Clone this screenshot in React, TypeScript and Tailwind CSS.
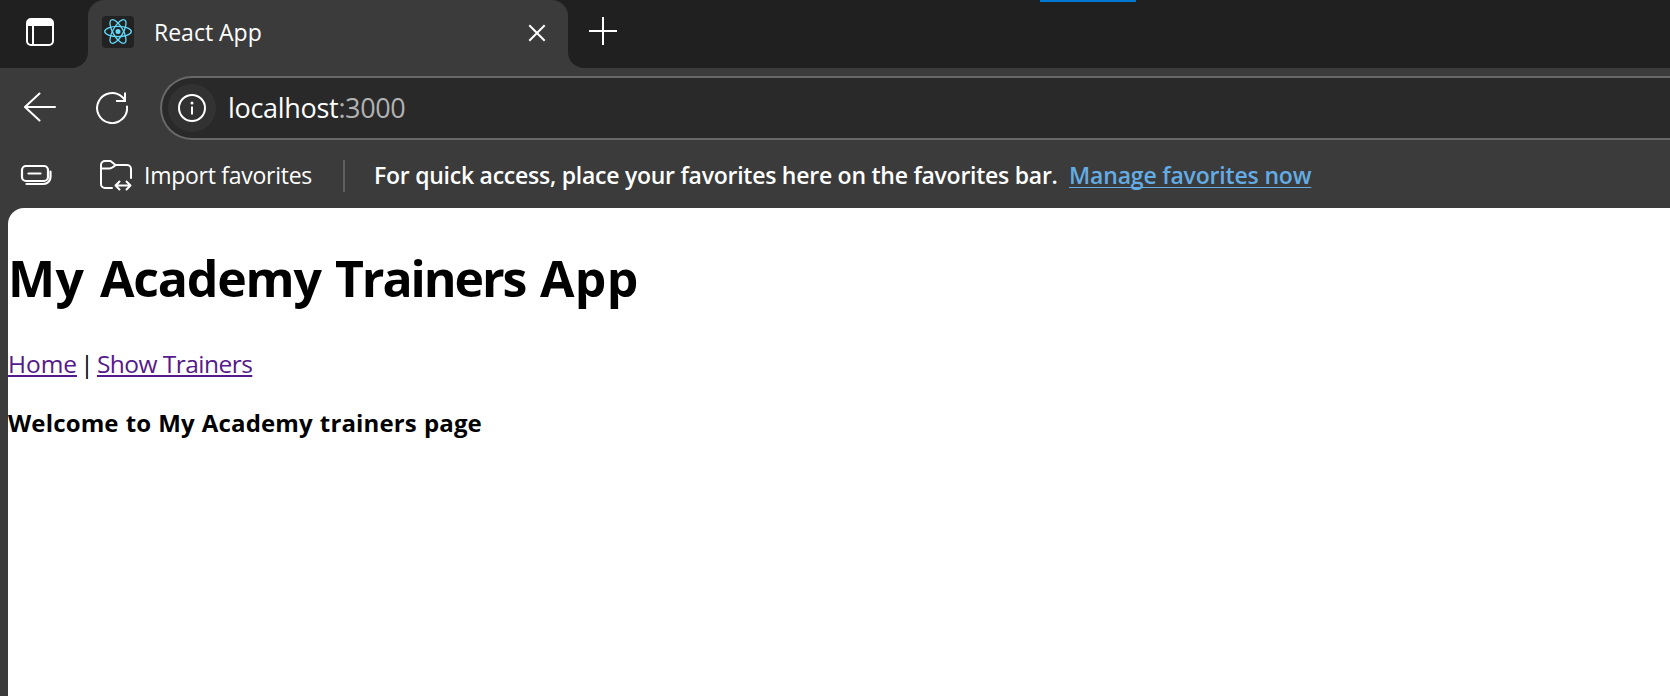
import type { ReactNode } from "react";

function Icon({ size = 32, width = 2, className = "", children }: { size?: number; width?: number; className?: string; children: ReactNode }) {
  return (
    <svg
      width={size}
      height={size}
      viewBox={`0 0 ${size} ${size}`}
      fill="none"
      stroke="#fff"
      strokeWidth={width}
      strokeLinecap="round"
      strokeLinejoin="round"
      className={`block shrink-0 ${className}`}
    >
      {children}
    </svg>
  );
}

function ReactFavicon() {
  return (
    <div className="flex size-8 shrink-0 items-center justify-center rounded-[4px] bg-[#222222]">
      <svg width="32" height="32" viewBox="0 0 32 32" fill="none" stroke="#61dafb" strokeWidth="1.3">
        <circle cx="16" cy="15.5" r="2.5" fill="#61dafb" stroke="none" />
        <ellipse cx="16" cy="15.5" rx="13.3" ry="5.1" />
        <ellipse cx="16" cy="15.5" rx="13.3" ry="5.1" transform="rotate(60 16 15.5)" />
        <ellipse cx="16" cy="15.5" rx="13.3" ry="5.1" transform="rotate(120 16 15.5)" />
      </svg>
    </div>
  );
}

function TabStrip() {
  return (
    <div className="flex h-[68px] bg-[#3b3b3b]">
      <div className="w-[88px] rounded-br-[16px] bg-[#202020] pt-4 pl-6">
        <Icon>
          <rect x="3" y="3" width="26" height="26" rx="4" />
          <path d="M3 10V7a4 4 0 0 1 4-4h18a4 4 0 0 1 4 4v3Z" fill="#fff" stroke="none" />
          <path d="M3 9h26M9 10v18" strokeLinecap="butt" />
        </Icon>
      </div>
      <div className="w-[480px] bg-linear-to-b from-[#202020] from-50% to-[#3b3b3b] to-50%">
        <div className="flex h-[68px] items-start rounded-t-[16px] bg-[#3b3b3b] pl-3.5">
          <div className="pt-4">
            <ReactFavicon />
          </div>
          <span className="ml-5 flex-1 text-[23px] leading-[64px] text-white">React App</span>
          <Icon className="mt-[17px] mr-[15px]">
            <path d="M8.3 8.3l15.4 15.4M23.7 8.3L8.3 23.7" strokeLinecap="butt" />
          </Icon>
        </div>
      </div>
      <div className="flex flex-1 items-start rounded-bl-[16px] bg-[#202020] pl-[19px]">
        <Icon className="mt-[15px]">
          <path d="M2 16h28M16 2v28" strokeLinecap="butt" />
        </Icon>
        <div className="ml-[421px] h-0.5 w-24 bg-[#0078d4]" />
      </div>
    </div>
  );
}

function AddressRow() {
  return (
    <div className="flex h-16 items-center">
      <Icon className="ml-6">
        <path d="M31 15H1.5" />
        <path d="M15.5 1.5L1 15l14.5 13.5" />
      </Icon>
      <Icon className="ml-10">
        <path d="M31 14.5A15 15 0 1 1 26.5 5.3L29 8" />
        <path d="M29 .5V9h-9" strokeLinejoin="miter" strokeLinecap="butt" />
      </Icon>
      <div className="ml-8 flex h-16 flex-1 items-center rounded-l-full border-2 border-r-0 border-[#686868] bg-[#292929] pl-1.5">
        <div className="flex size-12 items-center justify-center rounded-full bg-[#323232]">
          <Icon>
            <circle cx="16" cy="16" r="13" />
            <path d="M16 14.5v8" strokeLinecap="butt" />
            <circle cx="16" cy="11" r="1.5" fill="#fff" stroke="none" />
          </Icon>
        </div>
        <div className="ml-3 text-[27px] whitespace-nowrap">
          <span className="tracking-[-0.3px] text-white">localhost</span>
          <span className="tracking-[-0.4px] text-[#b2b2b2]">:3000</span>
        </div>
      </div>
    </div>
  );
}

function FavoritesBar() {
  return (
    <div className="flex h-[68px] items-center text-[23px] whitespace-nowrap text-white">
      <Icon className="ml-5" width={2.2}>
        <rect x="2" y="8" width="26" height="15" rx="4" />
        <path d="M8.500 15.500h12" />
        <path d="M6.500 26h17a7 7 0 0 0 7-7v-5.500" />
      </Icon>
      <Icon className="mt-1 ml-12">
        <path d="M12 28H5a4 4 0 0 1-4-4V5a4 4 0 0 1 4-4h5.5l5 4H27a4 4 0 0 1 4 4v9" />
        <path d="M1 8.5h8.500c2 0 3-.8 6-3.500" />
        <path d="M15.5 25.5h15M19.5 21.500l-4 4 4 4M26.500 21.500l4 4-4 4" />
      </Icon>
      <span className="mt-0.5 ml-3 w-[199px] tracking-[-0.27px]">Import favorites</span>
      <span className="mt-1 h-8 w-0.5 bg-[#5e5e5e]" />
      <span className="mt-0.5 ml-[29px] w-[695px] font-semibold tracking-[-0.25px]">
        For quick access, place your favorites here on the favorites bar.
      </span>
      <a className="mt-0.5 font-semibold tracking-[-0.17px] text-[#63ace5] underline decoration-1 underline-offset-[3px] [text-decoration-skip-ink:none]">
        Manage favorites now
      </a>
    </div>
  );
}

function Page() {
  const link = "text-[#551a8b] underline decoration-2 underline-offset-2 [text-decoration-skip-ink:none]";
  return (
    <main className="ml-2 flex-1 rounded-tl-[16px] bg-white text-black">
      <h1 className="flex pt-9 text-[50px] leading-[68px] font-bold whitespace-pre">
        <span className="w-[92px] tracking-[0.3px]">My </span>
        <span className="w-[235px] tracking-[-1.2px]">Academy </span>
        <span className="w-[205px] tracking-[-2.1px]">Trainers </span>
        <span className="tracking-[0.3px]">App</span>
      </h1>
      <nav className="mt-[35px] flex text-[24.5px] leading-[34px]">
        <a className={`tracking-[-0.07px] ${link}`}>Home</a>
        <span className="w-5 text-center">|</span>
        <a className={`tracking-[-0.54px] ${link}`}>Show Trainers</a>
      </nav>
      <p className="mt-[25px] text-[24px] leading-[34px] font-bold tracking-[0.15px] [word-spacing:0.6px]">Welcome to My Academy trainers page</p>
    </main>
  );
}

export default function App() {
  return (
    <div className="flex h-[696px] w-full flex-col overflow-hidden bg-[#3b3b3b] font-['Open_Sans','Noto_Sans',sans-serif]">
      <TabStrip />
      <div className="h-2" />
      <AddressRow />
      <FavoritesBar />
      <Page />
    </div>
  );
}
